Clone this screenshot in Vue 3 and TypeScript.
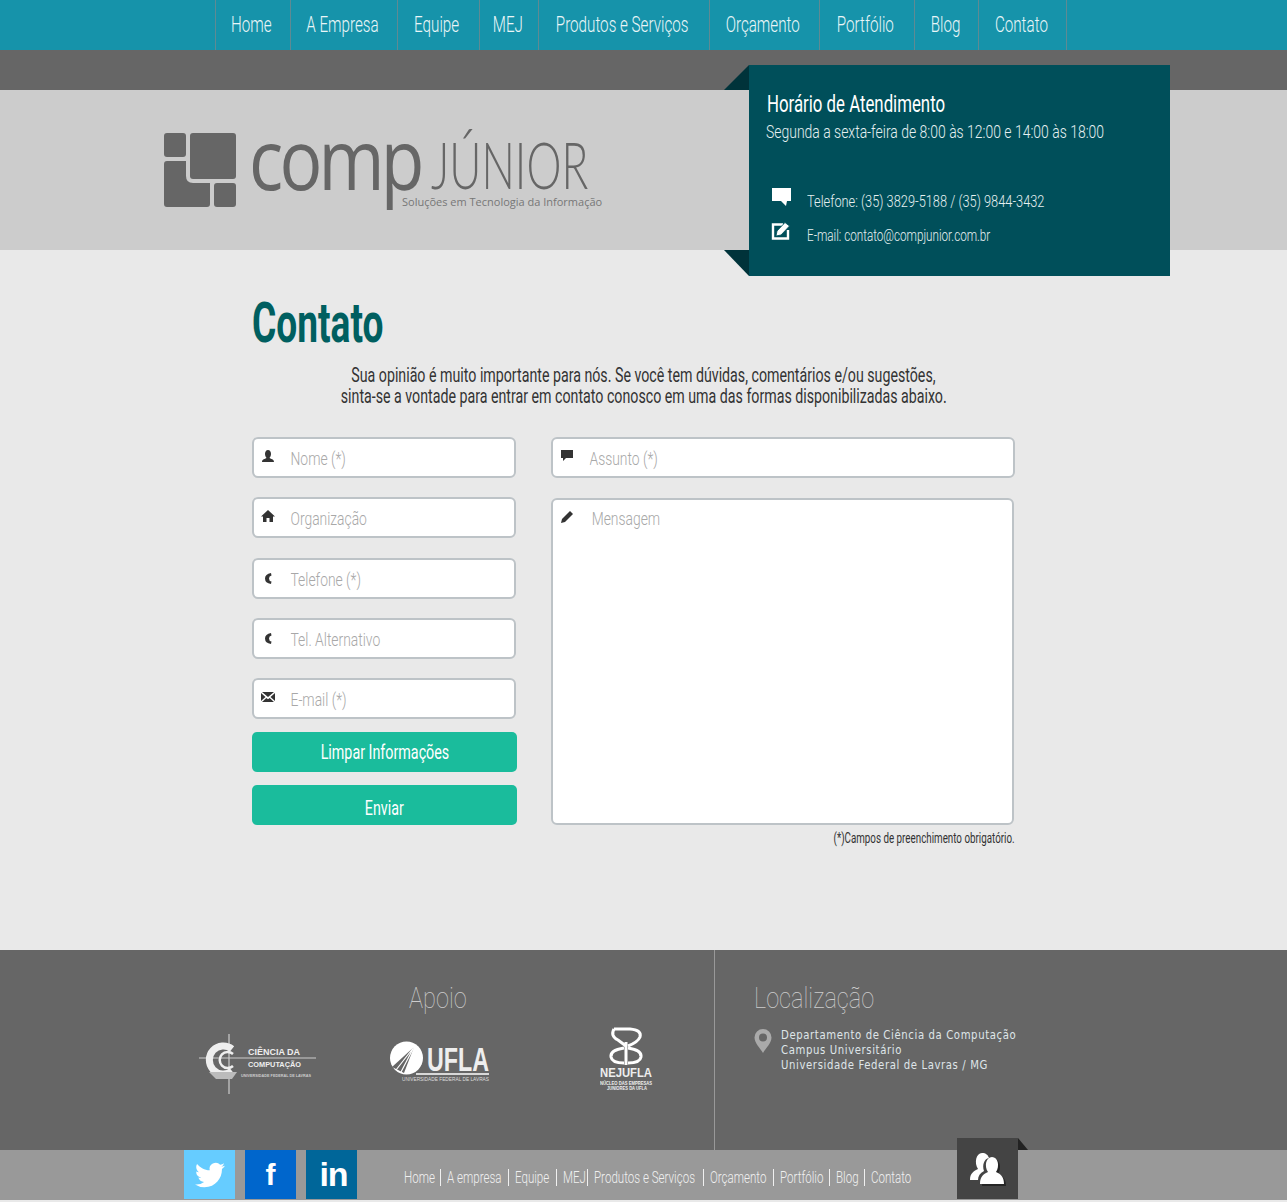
<template>
  <div class="page">
    <nav class="topnav">
      <a v-for="item in navItems" :key="item.label" class="topnav-item" :style="{ width: item.w + 'px' }"><span>{{ item.label }}</span></a>
    </nav>
    <div class="strip"></div>

    <header class="brand">
      <div class="logo">
        <svg class="logo-mark" width="73" height="75" viewBox="0 0 73 75">
          <rect x="0" y="0" width="22" height="24" rx="3" fill="#666" />
          <rect x="26" y="0" width="46" height="46" rx="3" fill="#666" />
          <path d="M3 28H22V43Q22 50 29 50H46V71Q46 74 43 74H3Q0 74 0 71V31Q0 28 3 28Z" fill="#666" />
          <rect x="50" y="50" width="22" height="24" rx="3" fill="#666" />
        </svg>
        <span class="logo-comp">comp</span>
        <span class="logo-junior">JÚNIOR</span>
        <span class="logo-tag">Soluções em Tecnologia da Informação</span>
      </div>
    </header>

    <aside class="hours">
      <i class="fold fold-top"></i>
      <i class="fold fold-bottom"></i>
      <h3>Horário de Atendimento</h3>
      <p class="hours-time">Segunda a sexta-feira de 8:00 às 12:00 e 14:00 às 18:00</p>
      <div class="hours-row phone-row">
        <svg width="20" height="20" viewBox="0 0 20 20"><path d="M1 1H20V14H16L15 19L10 14H1Z" fill="#fff" /></svg>
        <span>Telefone: (35) 3829-5188 / (35) 9844-3432</span>
      </div>
      <div class="hours-row mail-row">
        <svg width="20" height="20" viewBox="0 0 20 20">
          <path d="M12 3.500H2V17.500H17V9" fill="none" stroke="#fff" stroke-width="2.400" />
          <path d="M5 15L6 10L14 1.500L18.500 5L10 14Z" fill="#fff" stroke="#004f5a" stroke-width=".8" />
        </svg>
        <span>E-mail: contato@compjunior.com.br</span>
      </div>
    </aside>

    <main class="content">
      <h1>Contato</h1>
      <p class="intro">
        <span>Sua opinião é muito importante para nós. Se você tem dúvidas, comentários e/ou sugestões,</span>
        <span>sinta-se a vontade para entrar em contato conosco em uma das formas disponibilizadas abaixo.</span>
      </p>
      <form class="form" @submit.prevent>
        <div class="col-left">
          <label v-for="f in leftFields" :key="f.ph" class="field">
            <svg class="field-icon" width="14" height="14" viewBox="0 0 14 14"><path :d="f.icon" fill="#333" /></svg>
            <input type="text" :placeholder="f.ph" />
          </label>
          <button type="button" class="btn btn-clear"><span>Limpar Informações</span></button>
          <button type="submit" class="btn btn-send"><span>Enviar</span></button>
        </div>
        <div class="col-right">
          <label class="field field-wide">
            <svg class="field-icon" width="14" height="14" viewBox="0 0 14 14"><path d="M1 1H13V9H6L3 12V9H1Z" fill="#333" /></svg>
            <input type="text" placeholder="Assunto (*)" />
          </label>
          <label class="field field-area">
            <svg class="field-icon" width="14" height="14" viewBox="0 0 14 14"><path d="M1 13L2 9L10 1L13 4L5 12Z" fill="#333" /></svg>
            <textarea placeholder="Mensagem"></textarea>
          </label>
          <p class="required"><span>(*)Campos de preenchimento obrigatório.</span></p>
        </div>
      </form>
    </main>

    <footer class="footer">
      <section class="support">
        <h2>Apoio</h2>
        <div class="partners">
          <svg class="logo-cc" width="118" height="61" viewBox="0 0 118 61">
            <path d="M30 0V60M0 24H117" stroke="#ccc" stroke-width="1.200" />
            <path d="M33 15A14 14 0 1 0 33 37" fill="none" stroke="#eee" stroke-width="7" />
            <path d="M34 20A8 8 0 1 0 34 32" fill="none" stroke="#eee" stroke-width="2.500" />
            <path d="M10 38H38L33 45H17Z" fill="#bbb" />
            <text x="49" y="21" class="t-cc" textLength="52" lengthAdjust="spacingAndGlyphs">CIÊNCIA DA</text>
            <text x="49" y="33" class="t-cc2" textLength="53" lengthAdjust="spacingAndGlyphs">COMPUTAÇÃO</text>
            <text x="42" y="43" class="t-cc3" textLength="70" lengthAdjust="spacingAndGlyphs">UNIVERSIDADE FEDERAL DE LAVRAS</text>
          </svg>
          <svg class="logo-ufla" width="100" height="44" viewBox="0 0 100 44">
            <circle cx="16.500" cy="17" r="16.500" fill="#fff" />
            <path d="M24 6L2 26L14 32Z" fill="#666" />
            <path d="M24 6L6 29M24 6L11 31" stroke="#fff" stroke-width="1.200" />
            <text x="37" y="30" class="t-ufla" textLength="62" lengthAdjust="spacingAndGlyphs">UFLA</text>
            <path d="M26 33H99" stroke="#fff" stroke-width="1.500" />
            <text x="12" y="40" class="t-ufla2" textLength="87" lengthAdjust="spacingAndGlyphs">UNIVERSIDADE FEDERAL DE LAVRAS</text>
          </svg>
          <svg class="logo-nej" width="54" height="68" viewBox="0 0 54 68">
            <g fill="none" stroke="#fff" stroke-width="3">
              <path d="M14 3H30Q42 4 40 11Q38 16 28 20" />
              <path d="M14 3Q10 10 18 14L26 20" />
              <path d="M26 16V39" />
              <path d="M24 22Q10 24 11 31Q12 37 24 37" />
              <path d="M28 22Q42 24 41 31Q40 37 28 37" />
            </g>
            <text x="0" y="51" class="t-nej" textLength="52" lengthAdjust="spacingAndGlyphs">NEJUFLA</text>
            <text x="0" y="59" class="t-nej2" textLength="52" lengthAdjust="spacingAndGlyphs">NÚCLEO DAS EMPRESAS</text>
            <text x="7" y="64" class="t-nej2" textLength="40" lengthAdjust="spacingAndGlyphs">JUNIORES DA UFLA</text>
          </svg>
        </div>
      </section>
      <section class="location">
        <h2>Localização</h2>
        <div class="address">
          <svg width="18" height="24" viewBox="0 0 18 24"><path fill-rule="evenodd" d="M9 0A8.5 8.5 0 0 1 17.5 8.5C17.5 14 12 19 9 24C6 19 .5 14 .5 8.500A8.500 8.500 0 0 1 9 0ZM9 4.500A4 4 0 1 0 9 12.500A4 4 0 1 0 9 4.500Z" fill="#aaa" /></svg>
          <p>
            <span>Departamento de Ciência da Computação</span>
            <span>Campus Universitário</span>
            <span>Universidade Federal de Lavras / MG</span>
          </p>
        </div>
      </section>
    </footer>

    <div class="bottom">
      <a class="social tw">
        <svg width="30" height="30" viewBox="0 0 24 24"><path d="M23.953 4.57a10 10 0 01-2.825.775 4.958 4.958 0 002.163-2.723c-.951.555-2.005.959-3.127 1.184a4.92 4.92 0 00-8.384 4.482C7.69 8.095 4.067 6.13 1.64 3.162a4.822 4.822 0 00-.666 2.475c0 1.71.87 3.213 2.188 4.096a4.904 4.904 0 01-2.228-.616v.06a4.923 4.923 0 003.946 4.827 4.996 4.996 0 01-2.212.085 4.936 4.936 0 004.604 3.417 9.867 9.867 0 01-6.102 2.105c-.39 0-.779-.023-1.17-.067a13.995 13.995 0 007.557 2.209c9.053 0 13.998-7.496 13.998-13.985 0-.21 0-.42-.015-.63A9.935 9.935 0 0024 4.590z" fill="#fff" /></svg>
      </a>
      <a class="social fb">f</a>
      <a class="social li">in</a>
      <div class="bottom-links">
        <a v-for="link in footerLinks" :key="link.label" :style="{ width: link.w + 'px' }"><span>{{ link.label }}</span></a>
      </div>
      <a class="top-tile">
        <i class="tile-fold"></i>
        <svg width="36" height="34" viewBox="0 0 36 34">
          <g fill="#000" opacity=".45" transform="translate(2 2)"><path d="M10 32C10 24 14 22 18 20C14 14 16 5 22 5C28 5 30 14 26 20C30 22 34 24 34 32Z" /></g>
          <path d="M0 28C0 21 4 19 8 17C4 11 6 1 12 1C16 1 18 3 19 6C14 7 12 13 14 19C10 21 8 24 8 28Z" fill="#fff" />
          <path d="M10 32C10 24 14 22 18 20C14 14 16 5 22 5C28 5 30 14 26 20C30 22 34 24 34 32Z" fill="#fff" />
        </svg>
      </a>
    </div>
    <div class="foot-edge"></div>
  </div>
</template>

<script setup lang="ts">
const navItems = [
  { label: 'Home', w: 75 },
  { label: 'A Empresa', w: 107 },
  { label: 'Equipe', w: 82 },
  { label: 'MEJ', w: 59 },
  { label: 'Produtos e Serviços', w: 171 },
  { label: 'Orçamento', w: 110 },
  { label: 'Portfólio', w: 95 },
  { label: 'Blog', w: 64 },
  { label: 'Contato', w: 89 }
]

const person = 'M7 1C9 1 10 3 10 5C10 7 9 8 8.500 9C10 10 13 10 13 13H1C1 10 4 10 5.500 9C5 8 4 7 4 5C4 3 5 1 7 1Z'
const phone = 'M10 3Q4 4 4 8.500Q4 13 10 14L10.500 11.500Q8 11 8 8.500Q8 6 10.500 5.500Z'

const leftFields = [
  { ph: 'Nome (*)', icon: person },
  { ph: 'Organização', icon: 'M7 1L14 7.500H12V13H8.500V9H5.500V13H2V7.500H0Z' },
  { ph: 'Telefone (*)', icon: phone },
  { ph: 'Tel. Alternativo', icon: phone },
  { ph: 'E-mail (*)', icon: 'M1 2H13L7 7ZM0 3L4.500 7L0 11ZM14 3L9.500 7L14 11ZM1 12L5.300 8L7 9.300L8.700 8L13 12Z' }
]

const footerLinks = [
  { label: 'Home', w: 36 },
  { label: 'A empresa', w: 68 },
  { label: 'Equipe', w: 48 },
  { label: 'MEJ', w: 31 },
  { label: 'Produtos e Serviços', w: 116 },
  { label: 'Orçamento', w: 70 },
  { label: 'Portfólio', w: 56 },
  { label: 'Blog', w: 35 },
  { label: 'Contato', w: 50 }
]
</script>

<style>
html, body { margin: 0; background: #e9e9e9; }
</style>

<style scoped>
/* no condensed family is installed, so text is squeezed with scaleX per block */
.page {
  position: relative;
  width: 1287px;
  height: 1202px;
  overflow: hidden;
  font-family: Roboto, "Liberation Sans", sans-serif;
  color: #333;
}
span { white-space: nowrap; }

.topnav {
  display: flex;
  height: 50px;
  padding-left: 215px;
  background: #1693aa;
}
.topnav-item {
  flex: none;
  display: flex;
  align-items: center;
  justify-content: center;
  box-sizing: border-box;
  padding: 0 3px 2px 0;
  border-left: 1px solid #5f8a93;
  font-size: 22px;
  font-weight: 300;
  color: #eaf6f8;
}
.topnav-item span { transform: scaleX(.69); }
.topnav-item:last-child { border-right: 1px solid #5f8a93; }

.strip { height: 40px; background: #666; }

.brand {
  height: 160px;
  padding-left: 164px;
  background: #ccc;
}
.logo {
  position: relative;
  display: flex;
  align-items: flex-start;
  padding-top: 43px;
  color: #666;
}
.logo-mark { flex: none; }
.logo-comp {
  width: 182px;
  margin-left: 12px;
  margin-top: -15px;
  font-family: "Open Sans", sans-serif;
  font-weight: 500;
  font-size: 84px;
  line-height: 80px;
  letter-spacing: -4.500px;
  transform: scaleX(.85);
  transform-origin: left;
}
.logo-junior {
  margin-top: -14px;
  font-family: Lato, sans-serif;
  font-weight: 300;
  font-size: 66px;
  line-height: 90px;
  transform: scaleX(.67);
  transform-origin: left;
}
.logo-tag {
  position: absolute;
  left: 238px;
  top: 104px;
  font-family: "Open Sans", sans-serif;
  font-size: 11px;
  color: #777;
}

.hours {
  position: absolute;
  left: 749px;
  top: 65px;
  box-sizing: border-box;
  width: 421px;
  height: 211px;
  padding: 25px 18px 0;
  background: #004f5a;
  color: #e6f0f1;
}
.fold { position: absolute; left: -25px; width: 25px; background: #00333a; }
.fold-top { top: 0; height: 25px; clip-path: polygon(100% 0, 100% 100%, 0 100%); }
.fold-bottom { bottom: 0; height: 26px; clip-path: polygon(0 0, 100% 0, 100% 100%); }
.hours h3 {
  margin: 0;
  font-size: 24px;
  line-height: 28px;
  font-weight: 400;
  white-space: nowrap;
  color: #fff;
  transform: scaleX(.7);
  transform-origin: left;
}
.hours-time {
  margin: 1px 0 0 -1px;
  font-size: 18px;
  font-weight: 300;
  line-height: 26px;
  white-space: nowrap;
  transform: scaleX(.775);
  transform-origin: left;
}
.hours-row {
  display: flex;
  align-items: center;
  font-size: 16px;
  font-weight: 300;
}
.hours-row svg { flex: none; margin: -10px 16px 0 4px; }
.hours-row span { transform: scaleX(.8); transform-origin: left; }
.mail-row span { transform: scaleX(.73); }
.phone-row { margin-top: 47px; }
.mail-row { margin-top: 15px; }

.content {
  height: 700px;
  box-sizing: border-box;
  padding: 43px 0 0 252px;
  background: #e9e9e9;
}
.content h1 {
  margin: 0;
  font-size: 55px;
  line-height: 60px;
  font-weight: 700;
  color: #005f60;
  transform: scaleX(.675);
  transform-origin: left;
}
.intro {
  display: flex;
  flex-direction: column;
  align-items: center;
  width: 783px;
  margin: 12px 0 0;
  font-size: 20px;
  line-height: 21px;
}
.intro span { transform: scaleX(.71); }
.form { display: flex; gap: 34px; margin-top: 30px; }
.col-left { display: flex; flex-direction: column; width: 265px; }
.col-right { display: flex; flex-direction: column; width: 464px; }

.field {
  position: relative;
  display: block;
  box-sizing: border-box;
  width: 264px;
  height: 41px;
  margin-bottom: 19.300px;
  border: 2px solid #bdc3c7;
  border-radius: 6px;
  background: #fff;
}
.field-wide { width: 464px; margin-bottom: 20.300px; }
.field-area { width: 463px; height: 327px; margin-bottom: 0; }
.field-icon { position: absolute; left: 7px; top: 10px; }
.field input, .field textarea {
  display: block;
  box-sizing: border-box;
  width: 137%;
  height: 100%;
  padding: 2px 8px 0 50px;
  border: 0;
  outline: 0;
  background: transparent;
  resize: none;
  font-family: inherit;
  font-weight: 300;
  font-size: 19px;
  transform: scaleX(.73);
  transform-origin: left;
}
.field textarea { padding: 7px 8px 0 53px; }
.field input::placeholder, .field textarea::placeholder { color: #a8a8a8; opacity: 1; }

.btn {
  display: flex;
  align-items: center;
  justify-content: center;
  width: 265px;
  height: 40px;
  padding: 0;
  border: 0;
  border-radius: 5px;
  background: #1abc9c;
  color: #fff;
  font-family: inherit;
  font-size: 20px;
}
.btn span { transform: scaleX(.715); }
.btn-clear { margin-top: -6px; }
.btn-send { margin-top: 13px; padding-top: 5px; }

.required {
  display: flex;
  justify-content: flex-end;
  margin: 5px 0 0;
  font-size: 14px;
  line-height: 16px;
}
.required span { transform: scaleX(.7); transform-origin: right; }

.footer {
  display: flex;
  height: 200px;
  background: #666;
  color: #c8c8c8;
}
.support {
  box-sizing: border-box;
  width: 715px;
  border-right: 1px solid #999;
}
.support h2, .location h2 {
  margin: 0;
  padding-top: 30px;
  font-size: 30px;
  line-height: 36px;
  font-weight: 100;
  color: #ccc;
  white-space: nowrap;
  transform: scaleX(.785);
  transform-origin: left;
}
.support h2 { margin-left: 409px; }
.partners {
  display: flex;
  align-items: flex-start;
  padding: 10px 0 0 199px;
}
.logo-cc { margin: 8px 73px 0 0; }
.logo-ufla { margin: 15px 110px 0 0; }
.logo-nej { flex: none; }
.location { padding-left: 39px; }
.address {
  display: flex;
  gap: 9px;
  margin-top: 11px;
}
.address svg { flex: none; margin-top: 2px; }
.address p {
  display: flex;
  flex-direction: column;
  align-items: flex-start;
  margin: 0;
  font-family: "DejaVu Sans", sans-serif;
  font-stretch: condensed;
  font-size: 13px;
  line-height: 15px;
  letter-spacing: 0.7px;
  color: #dfe5e8;
}
.address span { transform: scaleX(.865); transform-origin: left; }

.t-cc, .t-cc2, .t-cc3, .t-ufla, .t-ufla2, .t-nej, .t-nej2 {
  font-family: "Liberation Sans", sans-serif;
  font-weight: 700;
  fill: #eee;
}
.t-cc { font-size: 9px; }
.t-cc2 { font-size: 7.500px; }
.t-cc3 { font-size: 4px; fill: #ccc; }
.t-ufla { font-size: 33px; }
.t-ufla2 { font-size: 6px; font-weight: 400; fill: #ddd; }
.t-nej { font-size: 13px; }
.t-nej2 { font-size: 5px; }

.bottom {
  position: relative;
  display: flex;
  height: 50px;
  padding-left: 184px;
  background: #999;
}
.social {
  flex: none;
  display: flex;
  align-items: center;
  justify-content: center;
  width: 51px;
  height: 49px;
  margin-right: 10px;
  color: #fff;
  font-family: "Liberation Sans", sans-serif;
  font-weight: 700;
}
.tw { background: #66ccff; }
.fb { background: #0066cc; font-size: 30px; }
.li { background: #006699; padding-left: 4px; box-sizing: border-box; font-size: 34px; letter-spacing: -1px; }
.bottom-links {
  display: flex;
  align-items: center;
  height: 54px;
  margin-left: 37px;
  font-size: 17px;
  font-weight: 300;
  color: #f0f0f0;
}
.bottom-links a {
  flex: none;
  box-sizing: border-box;
  padding-left: 6px;
  border-left: 1px solid #f0f0f0;
  line-height: 17px;
}
.bottom-links span { display: inline-block; transform: scaleX(.68); transform-origin: left; }
.bottom-links a:first-child { padding-left: 0; border-left: 0; }
.top-tile {
  position: absolute;
  left: 957px;
  top: -12px;
  display: flex;
  align-items: center;
  justify-content: center;
  width: 61px;
  height: 61px;
  background: #444;
}
.tile-fold {
  position: absolute;
  left: 61px;
  top: 0;
  width: 10px;
  height: 12px;
  background: #222;
  clip-path: polygon(0 0, 100% 100%, 0 100%);
}
.foot-edge { height: 2px; background: #e9e9e9; }
</style>
